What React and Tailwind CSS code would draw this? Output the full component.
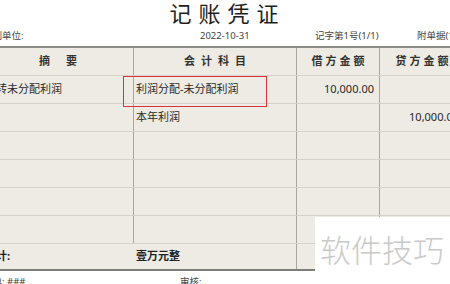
const rows = [
  { summary: '结转未分配利润', account: '利润分配-未分配利润', debit: '10,000.00', credit: '' },
  { summary: '', account: '本年利润', debit: '', credit: '10,000.00' },
  { summary: '', account: '', debit: '', credit: '' },
  { summary: '', account: '', debit: '', credit: '' },
  { summary: '', account: '', debit: '', credit: '' },
  { summary: '', account: '', debit: '', credit: '' },
];

const cjk = "font-['Noto_Sans','Noto_Sans_CJK_SC',sans-serif]";
const grid = 'grid grid-cols-[150px_163px_83px_85px]';

export default function App() {
  return (
    <div className={`relative w-[450px] h-[284px] overflow-hidden bg-white text-[#222] ${cjk}`}>
      {/* title */}
      <div className="h-[26px] flex justify-center items-center">
        <h1 className="text-[22px] leading-none tracking-[7px] -mr-[5px] text-[#1e1e1e] font-normal">记账凭证</h1>
      </div>

      <div className="-ml-[17px] w-[481px]">
        {/* info line */}
        <div className="h-[20px] flex items-center text-[9.5px] text-[#444]">
          <span className="w-[217px]">编制单位:</span>
          <span className="w-[115px]">2022-10-31</span>
          <span className="w-[102px]">记字第1号(1/1)</span>
          <span>附单据(1)</span>
        </div>

        {/* voucher table */}
        <div className="relative bg-[#edebe3] border-t-2 border-[#8d8c88]">
          <div className={`${grid} h-[28px] border-b border-[#d5d3c9] text-[11px] font-bold text-[#333]`}>
            <div className="flex items-center justify-center gap-[16px]"><span>摘</span><span>要</span></div>
            <div className="flex items-center justify-center tracking-[6px] -mr-[6px] border-l border-[#a9a79e]">会计科目</div>
            <div className="flex items-center justify-center tracking-[3px] border-l border-[#a9a79e]"><span className="-mr-[3px]">借方金额</span></div>
            <div className="flex items-center justify-center tracking-[3px] border-l border-[#a9a79e]"><span className="-mr-[3px]">贷方金额</span></div>
          </div>

          {rows.map((r, i) => (
            <div key={i} className={`${grid} h-[28px] border-b border-[#d5d3c9] text-[11px] text-[#2a2a2a]`}>
              <div className="flex items-center pl-[2px] whitespace-nowrap">{r.summary}</div>
              <div className="flex items-center pl-[2px] whitespace-nowrap border-l border-[#a9a79e]">{r.account}</div>
              <div className="flex items-center justify-end pr-[5px] border-l border-[#a9a79e]">{r.debit}</div>
              <div className="flex items-center justify-end pr-[5px] border-l border-[#a9a79e]">{r.credit}</div>
            </div>
          ))}

          {/* total */}
          <div className={`${grid} h-[27px] text-[11px] font-bold text-[#222] border-b-2 border-[#7d7c78]`}>
            <div className="flex items-center pl-[2px]">合计:</div>
            <div className="flex items-center pl-[3px]">壹万元整</div>
            <div className="border-l border-[#a9a79e]"></div>
            <div className="border-l border-[#a9a79e]"></div>
          </div>

          {/* highlighted account */}
          <div className="absolute left-[140px] top-[28px] w-[144px] h-[31px] border-[1.5px] border-[#d9343c]"></div>
        </div>

        {/* signatures */}
        <div className="flex pt-[6px] text-[9.5px] text-[#444] leading-none">
          <span className="w-[197px]">制单: ###</span>
          <span>审核:</span>
        </div>
      </div>

      {/* watermark */}
      <div className="absolute left-[315px] top-[217px] w-[135px] h-[67px] bg-white flex items-center pl-[5px]">
        <span className="text-[31px] font-light text-[#c9c9c9] leading-none whitespace-nowrap">软件技巧</span>
      </div>
    </div>
  );
}
